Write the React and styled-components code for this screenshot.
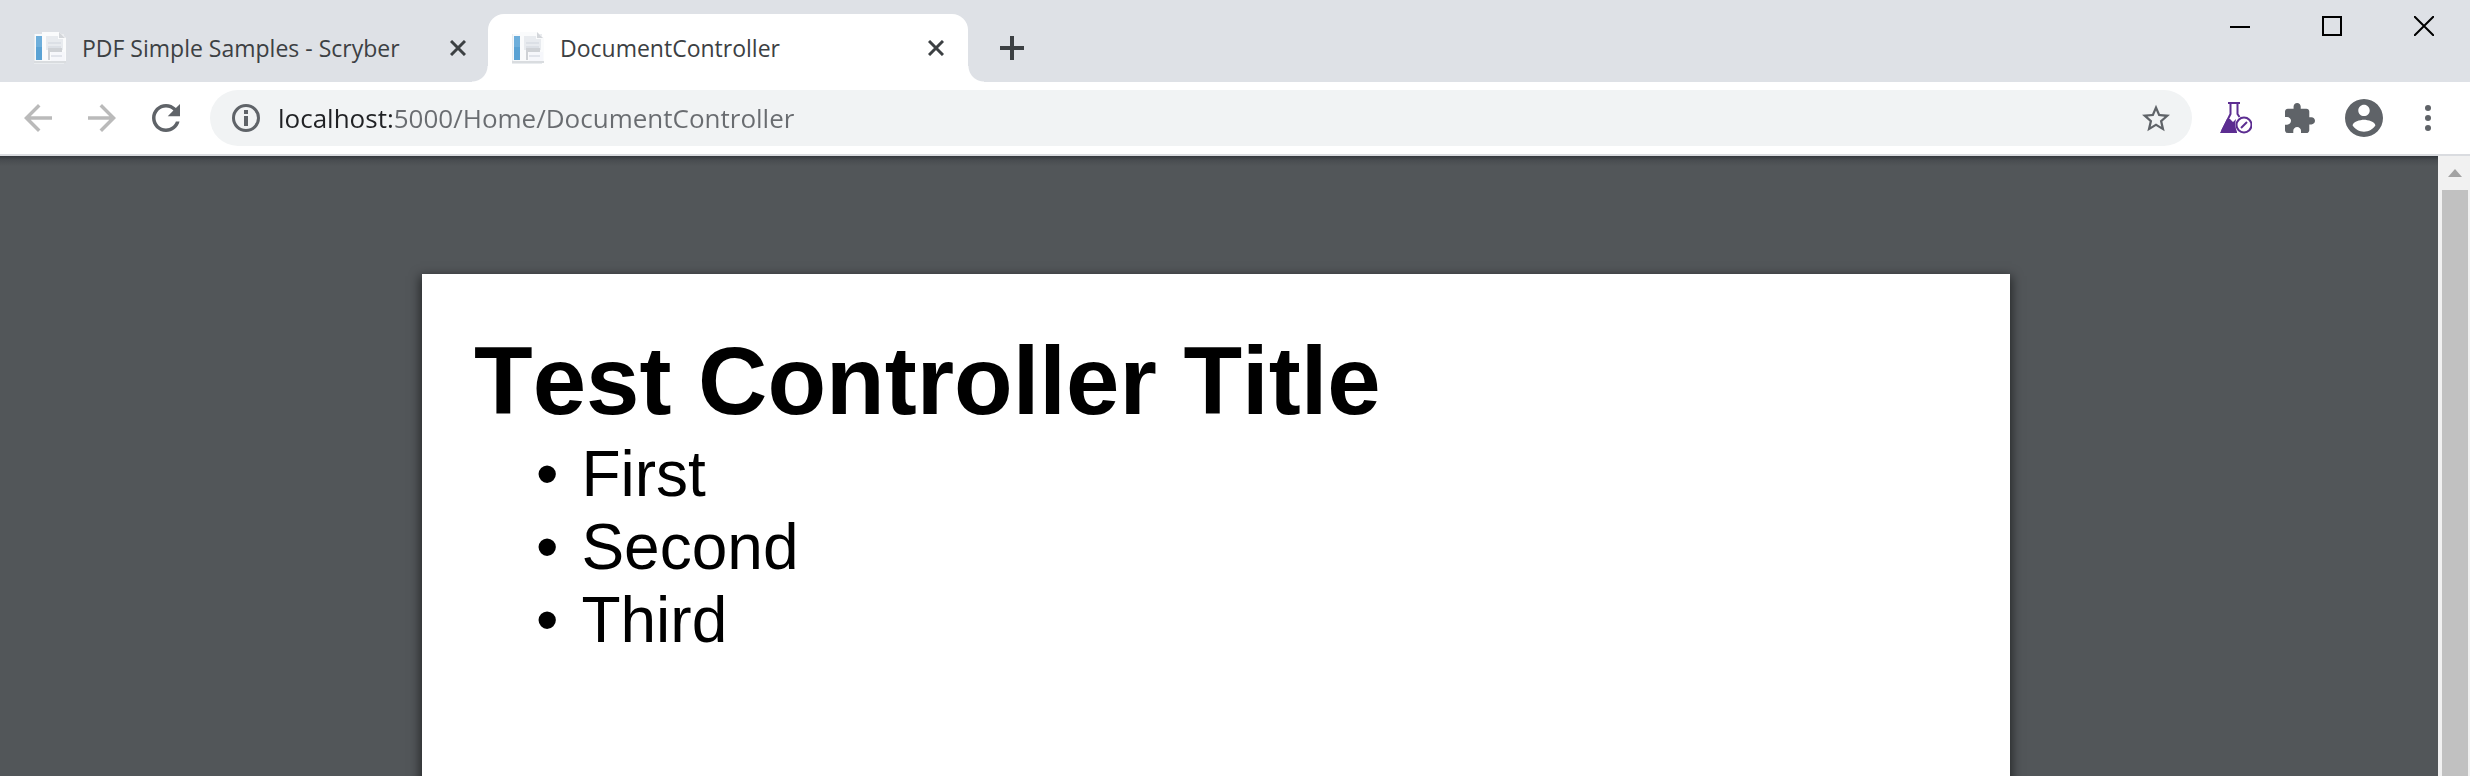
import React from "react";
import styled, { createGlobalStyle, css } from "styled-components";

const GlobalStyle = createGlobalStyle`
  *, *::before, *::after { box-sizing: border-box; }
  body { margin: 0; background: #525659; font-family: "Open Sans", "Noto Sans", sans-serif; }
  button { padding: 0; border: 0; background: none; font: inherit; color: inherit; }
  svg { display: block; flex: none; }
`;

const Browser = styled.div`
  display: flex;
  flex-direction: column;
  height: 100vh;
  overflow: hidden;
`;

const TabStrip = styled.header`
  display: flex;
  justify-content: space-between;
  height: 82px;
  padding-left: 10px;
  background: #dee1e6;
`;

const Tabs = styled.nav`
  display: flex;
  align-items: flex-end;
`;

const Tab = styled.div`
  position: relative;
  display: flex;
  align-items: center;
  width: 480px;
  height: 68px;
  padding: 0 20px 0 24px;
  color: #3c4043;
  & + & { margin-left: -2px; }
  ${(p) =>
    p.$active &&
    css`
      background: #fff;
      border-radius: 16px 16px 0 0;
      &::before,
      &::after {
        content: "";
        position: absolute;
        bottom: 0;
        width: 16px;
        height: 16px;
      }
      &::before {
        right: 100%;
        background: radial-gradient(circle at 0 0, transparent 15px, #fff 16px);
      }
      &::after {
        left: 100%;
        background: radial-gradient(circle at 100% 0, transparent 15px, #fff 16px);
      }
    `}
`;

const TabTitle = styled.button`
  display: flex;
  flex: 1;
  align-items: center;
  gap: 16px;
  min-width: 0;
  font-size: 23px;
  line-height: 32px;
  white-space: nowrap;
`;

const TabClose = styled.button`
  display: grid;
  place-items: center;
  width: 24px;
  height: 32px;
`;

const NewTab = styled.button`
  display: grid;
  place-items: center;
  width: 56px;
  height: 68px;
  margin-left: 16px;
  color: #3c4043;
`;

const WindowControls = styled.div`
  display: flex;
`;

const WindowButton = styled.button`
  display: grid;
  place-items: center;
  width: 92px;
  height: 52px;
  color: #000;
`;

const Toolbar = styled.div`
  display: flex;
  align-items: center;
  height: 74px;
  padding: 0 10px 0 6px;
  background: #fff;
  border-bottom: 2px solid #dadce0;
  color: #5f6368;
`;

const ToolButton = styled.button`
  display: grid;
  flex: none;
  place-items: center;
  width: 64px;
  height: 56px;
  color: ${(p) => (p.$muted ? "#bababa" : "#5f6368")};
`;

const AddressBar = styled.div`
  display: flex;
  flex: 1;
  align-items: center;
  gap: 18px;
  height: 56px;
  margin: 0 12px;
  padding: 0 22px;
  background: #f1f3f4;
  border-radius: 28px;
`;

const AddressButton = styled.button`
  flex: none;
`;

const AddressInput = styled.input`
  flex: 1;
  min-width: 0;
  height: 40px;
  padding: 0;
  border: 0;
  outline: 0;
  font-family: inherit;
  font-size: 26px;
  color: #5f6368;
  background: linear-gradient(90deg, #202124 115px, #696c70 115px);
  background-clip: text;
  -webkit-background-clip: text;
  -webkit-text-fill-color: transparent;
`;

const Actions = styled.div`
  display: flex;
`;

const Viewer = styled.main`
  display: flex;
  flex: 1;
  min-height: 0;
  background: #525659;
`;

const Canvas = styled.div`
  display: flex;
  flex: 1;
  align-items: flex-start;
  justify-content: center;
  padding: 118px 6px 0 0;
  overflow: hidden;
  background: linear-gradient(#33373c, #484c50 4px, #525659 10px);
`;

const Page = styled.article`
  width: 100%;
  max-width: 1588px;
  min-height: 2246px;
  padding: 52px;
  background: #fff;
  color: #000;
  font-family: "Liberation Sans", Arial, sans-serif;
  font-kerning: none;
  box-shadow: 0 4px 10px 2px rgba(0, 0, 0, 0.55);
`;

const Title = styled.h1`
  margin: 0;
  font-size: 96px;
  font-weight: 700;
  line-height: 110px;
`;

const List = styled.ul`
  margin: 0;
  padding: 2px 0 0 62px;
  list-style: none;
  font-size: 64px;
  line-height: 73px;
`;

const Item = styled.li`
  display: flex;
  gap: 23px;
  &::before { content: "•"; }
`;

const Scrollbar = styled.div`
  display: flex;
  flex: none;
  flex-direction: column;
  width: 32px;
  padding: 0 2px 0 4px;
  background: #f1f1f1;
`;

const ScrollArrow = styled.button`
  display: grid;
  flex: none;
  place-items: center;
  height: 34px;
`;

const ScrollThumb = styled.div`
  flex: 1;
  background: #c1c1c1;
`;

const Favicon = () => (
  <svg width="32" height="32" viewBox="0 0 32 32">
    <path d="M0 2h30v30H0z" fill="#e9ecef" />
    <path d="M1 2h7v27H1z" fill="#f7f9fb" />
    <path d="M2 4h6v24H2z" fill="#6daedb" />
    <path d="M2 15h6v13H2z" fill="#5aa2d4" />
    <path d="M8 0h17l7 6v24H8z" fill="#fafbfc" />
    <path d="M12 4h12v3h5v11H12z" fill="#e8ebef" />
    <path d="M25 0l6 6h-6z" fill="#d3d6da" />
    <path d="M14 10h13v2H14zM14 14h13v2H14z" fill="#dce0e6" />
    <path d="M14 16h14v4H16v8h-2z" fill="#cfd2d6" />
    <path d="M17 20h14v9H17z" fill="#f6f7fb" />
    <path d="M17 23h11v2H17z" fill="#e1e4eb" />
    <path d="M0 29h32v2H0z" fill="#d9dcdf" />
  </svg>
);

const Cross = () => (
  <svg width="16" height="16" viewBox="0 0 16 16" stroke="currentColor" strokeWidth="3">
    <path d="M1 1l14 14M15 1L1 15" />
  </svg>
);

const Glyph = ({ size = 28, box, d }) => (
  <svg width={size} height={size} viewBox={box} fill="currentColor">
    <path d={d} />
  </svg>
);

const Flask = () => (
  <svg width="32" height="32" viewBox="0 0 32 32" fill="none" stroke="#5c2d91">
    <path d="M8 1h12" strokeWidth="2" />
    <path d="M10.500 2v10L2 29M17.500 2v10l2 3" strokeWidth="2" />
    <path d="M7 17h3l3 3 3-3c-1 4-1 8 1 13v1H0z" fill="#5c2d91" stroke="none" />
    <circle cx="24" cy="23" r="7.500" strokeWidth="2" fill="#fff" />
    <path d="M21 26l6-6" strokeWidth="2" />
  </svg>
);

const TABS = [
  { title: "PDF Simple Samples - Scryber", active: false },
  { title: "DocumentController", active: true },
];

const ITEMS = ["First", "Second", "Third"];

export default function App() {
  return (
    <Browser>
      <GlobalStyle />
      <TabStrip>
        <Tabs aria-label="Tabs">
          {TABS.map((tab) => (
            <Tab key={tab.title} $active={tab.active}>
              <TabTitle>
                <Favicon />
                {tab.title}
              </TabTitle>
              <TabClose aria-label={`Close ${tab.title}`}>
                <Cross />
              </TabClose>
            </Tab>
          ))}
          <NewTab aria-label="New tab">
            <svg width="24" height="24" viewBox="0 0 24 24" stroke="currentColor" strokeWidth="4">
              <path d="M12 0v24M0 12h24" />
            </svg>
          </NewTab>
        </Tabs>
        <WindowControls>
          <WindowButton aria-label="Minimize">
            <svg width="20" height="20" viewBox="0 0 20 20">
              <path d="M0 10h20v2H0z" />
            </svg>
          </WindowButton>
          <WindowButton aria-label="Maximize">
            <svg width="20" height="20" viewBox="0 0 20 20" fill="none" stroke="currentColor" strokeWidth="2">
              <path d="M1 1h18v18H1z" />
            </svg>
          </WindowButton>
          <WindowButton aria-label="Close window">
            <svg width="20" height="20" viewBox="0 0 20 20" stroke="currentColor" strokeWidth="2">
              <path d="M0 0l20 20M20 0L0 20" />
            </svg>
          </WindowButton>
        </WindowControls>
      </TabStrip>

      <Toolbar>
        <ToolButton $muted aria-label="Back">
          <Glyph box="4 4 16 16" d="M20 11H7.830l5.590-5.590L12 4l-8 8 8 8 1.410-1.410L7.830 13H20v-2z" />
        </ToolButton>
        <ToolButton $muted aria-label="Forward">
          <Glyph box="4 4 16 16" d="M12 4l-1.410 1.410L16.170 11H4v2h12.170l-5.580 5.590L12 20l8-8z" />
        </ToolButton>
        <ToolButton aria-label="Reload">
          <Glyph
            box="4 4 16 16"
            d="M17.650 6.350C16.200 4.900 14.210 4 12 4c-4.420 0-7.990 3.580-7.990 8s3.570 8 7.990 8c3.730 0 6.840-2.550 7.730-6h-2.080c-.82 2.330-3.040 4-5.650 4-3.310 0-6-2.690-6-6s2.690-6 6-6c1.660 0 3.140.69 4.220 1.780L13 11h7V4l-2.350 2.350z"
          />
        </ToolButton>
        <AddressBar>
          <AddressButton aria-label="Site information">
            <svg width="28" height="28" viewBox="0 0 28 28" fill="currentColor">
              <circle cx="14" cy="14" r="12.500" fill="none" stroke="currentColor" strokeWidth="3" />
              <path d="M12 6h4v4h-4zM12 12h4v10h-4z" />
            </svg>
          </AddressButton>
          <AddressInput aria-label="Address" defaultValue="localhost:5000/Home/DocumentController" />
          <AddressButton aria-label="Bookmark this page">
            <Glyph
              box="2 2 20 19"
              d="M22 9.240l-7.190-.62L12 2 9.190 8.630 2 9.240l5.460 4.730L5.820 21 12 17.270 18.180 21l-1.630-7.030L22 9.240zM12 15.400l-3.760 2.270 1-4.280-3.320-2.880 4.380-.38L12 6.100l1.710 4.040 4.380.38-3.320 2.880 1 4.280L12 15.400z"
            />
          </AddressButton>
        </AddressBar>
        <Actions>
          <ToolButton aria-label="Test extension">
            <Flask />
          </ToolButton>
          <ToolButton aria-label="Extensions">
            <Glyph
              size={30}
              box="2 1 21 21"
              d="M20.500 11H19V7c0-1.100-.9-2-2-2h-4V3.500C13 2.120 11.880 1 10.500 1S8 2.120 8 3.500V5H4c-1.100 0-1.990.9-1.990 2v3.800H3.500c1.490 0 2.700 1.210 2.700 2.700s-1.210 2.700-2.700 2.700H2V20c0 1.100.9 2 2 2h3.800v-1.500c0-1.490 1.210-2.700 2.700-2.700 1.490 0 2.700 1.210 2.700 2.700V22H17c1.100 0 2-.9 2-2v-4h1.500c1.380 0 2.500-1.120 2.500-2.500S21.880 11 20.500 11z"
            />
          </ToolButton>
          <ToolButton aria-label="Profile">
            <Glyph
              size={38}
              box="2 2 20 20"
              d="M12 2C6.480 2 2 6.480 2 12s4.480 10 10 10 10-4.480 10-10S17.520 2 12 2zm0 3c1.660 0 3 1.340 3 3s-1.340 3-3 3-3-1.340-3-3 1.340-3 3-3zm0 14.200c-2.500 0-4.710-1.280-6-3.220.03-1.990 4-3.080 6-3.080 1.990 0 5.970 1.090 6 3.080-1.290 1.940-3.500 3.220-6 3.220z"
            />
          </ToolButton>
          <ToolButton aria-label="Menu">
            <svg width="6" height="26" viewBox="0 0 6 26" fill="currentColor">
              <circle cx="3" cy="3" r="3" />
              <circle cx="3" cy="13" r="3" />
              <circle cx="3" cy="23" r="3" />
            </svg>
          </ToolButton>
        </Actions>
      </Toolbar>

      <Viewer>
        <Canvas>
          <Page>
            <Title>Test Controller Title</Title>
            <List>
              {ITEMS.map((item) => (
                <Item key={item}>{item}</Item>
              ))}
            </List>
          </Page>
        </Canvas>
        <Scrollbar>
          <ScrollArrow aria-label="Scroll up">
            <svg width="14" height="8" viewBox="0 0 14 8" fill="#a3a3a3">
              <path d="M7 0l7 8H0z" />
            </svg>
          </ScrollArrow>
          <ScrollThumb />
        </Scrollbar>
      </Viewer>
    </Browser>
  );
}
